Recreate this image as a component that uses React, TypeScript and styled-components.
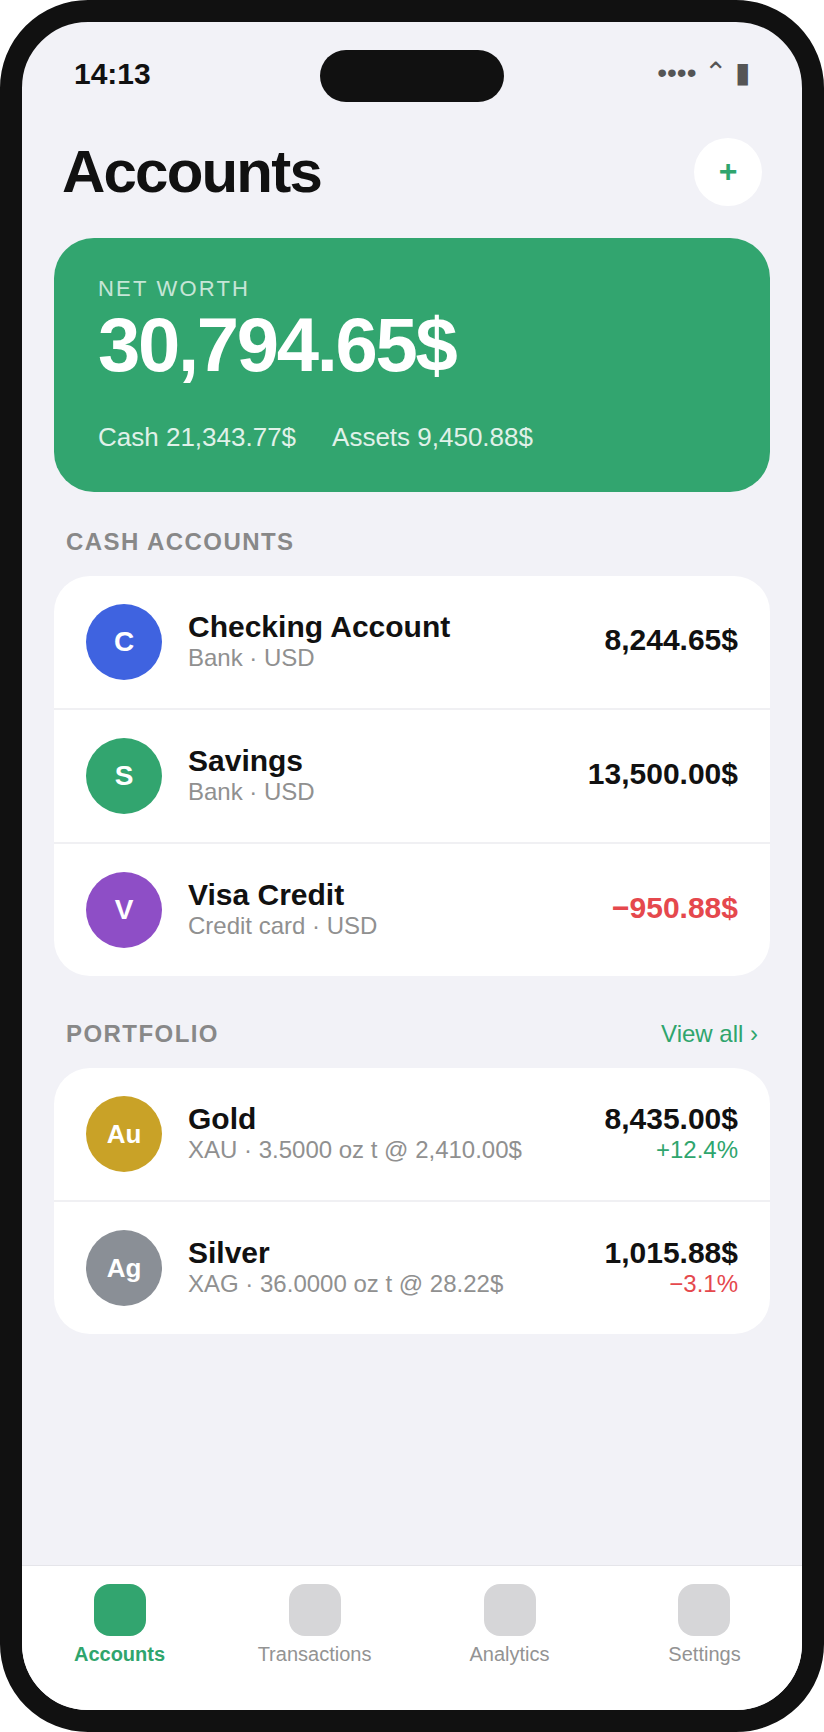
import React from 'react';
import styled, { createGlobalStyle } from 'styled-components';

const GlobalStyle = createGlobalStyle`
  html, body {
    margin: 0;
    padding: 0;
    background: #fff;
  }
  body {
    font-family: "Liberation Sans", Arial, sans-serif;
  }
`;

const Phone = styled.div`
  position: relative;
  width: 824px;
  height: 1732px;
  box-sizing: border-box;
  border: 22px solid #111;
  border-radius: 88px;
  background: #f2f2f7;
  overflow: hidden;
  display: flex;
  flex-direction: column;
`;

const Island = styled.div`
  position: absolute;
  top: 28px;
  left: 298px;
  width: 184px;
  height: 52px;
  border-radius: 26px;
  background: #111;
`;

const StatusBar = styled.div`
  display: flex;
  justify-content: space-between;
  align-items: center;
  height: 52px;
  margin-top: 26px;
  padding: 0 52px;
  flex: none;
`;

const Time = styled.span`
  font-size: 30px;
  font-weight: 700;
  color: #111;
`;

const StatusIcons = styled.span`
  font-size: 28px;
  color: #555;
  padding-bottom: 4px;
`;

const Content = styled.main`
  flex: 1;
  padding: 38px 32px 0;
  display: flex;
  flex-direction: column;
`;

const Header = styled.header`
  display: flex;
  justify-content: space-between;
  align-items: center;
  padding: 0 8px;
  margin-bottom: 32px;
`;

const Title = styled.h1`
  margin: 0;
  font-size: 60px;
  line-height: 68px;
  font-weight: 700;
  letter-spacing: -1.8px;
  color: #111;
`;

const AddButton = styled.button`
  width: 68px;
  height: 68px;
  border: 0;
  border-radius: 50%;
  background: #fff;
  color: #2fa56d;
  font: 700 32px "Liberation Sans", Arial, sans-serif;
  padding: 0 0 2px;
`;

const NetCard = styled.section`
  background: #32a56f;
  border-radius: 40px;
  padding: 37px 44px;
  height: 254px;
  box-sizing: border-box;
  color: #fff;
`;

const NetLabel = styled.div`
  font-size: 22px;
  line-height: 28px;
  letter-spacing: 2.2px;
  opacity: 0.72;
`;

const NetValue = styled.div`
  font-size: 76px;
  line-height: 84px;
  font-weight: 700;
  letter-spacing: -2.28px;
`;

const NetSplit = styled.div`
  display: flex;
  gap: 36px;
  margin-top: 34px;
  font-size: 26px;
  line-height: 32px;
  opacity: 0.85;
`;

const SectionHead = styled.div<{ $top: number }>`
  display: flex;
  justify-content: space-between;
  align-items: center;
  padding: 0 12px;
  margin: ${(p) => p.$top}px 0 20px;
`;

const SectionLabel = styled.h2`
  margin: 0;
  font-size: 24px;
  line-height: 28px;
  font-weight: 700;
  letter-spacing: 1.44px;
  color: #888;
`;

const ViewAll = styled.span`
  font-size: 24px;
  line-height: 28px;
  color: #2fa56d;
`;

const Card = styled.section`
  background: #fff;
  border-radius: 36px;
`;

const Row = styled.div`
  display: flex;
  align-items: center;
  height: 132px;
  padding: 0 32px;
  gap: 26px;
  & + & {
    border-top: 2px solid #f0f0f3;
  }
`;

const Avatar = styled.div<{ $bg: string; $wide?: boolean }>`
  width: 76px;
  height: 76px;
  flex: none;
  border-radius: 50%;
  background: ${(p) => p.$bg};
  color: #fff;
  font-size: ${(p) => (p.$wide ? 26 : 28)}px;
  font-weight: 700;
  display: flex;
  align-items: center;
  justify-content: center;
`;

const Info = styled.div`
  flex: 1;
  min-width: 0;
`;

const Name = styled.div`
  font-size: 30px;
  line-height: 31px;
  font-weight: 700;
  color: #111;
`;

const Sub = styled.div`
  font-size: 24px;
  line-height: 31px;
  color: #909090;
`;

const Amounts = styled.div<{ $lift?: boolean }>`
  text-align: right;
  padding-bottom: ${(p) => (p.$lift ? 6 : 0)}px;
`;

const Amount = styled.div<{ $negative?: boolean }>`
  font-size: 30px;
  line-height: 31px;
  font-weight: 700;
  color: ${(p) => (p.$negative ? '#e5484d' : '#111')};
`;

const Change = styled.div<{ $up: boolean }>`
  font-size: 24px;
  line-height: 31px;
  color: ${(p) => (p.$up ? '#2fa56d' : '#e5484d')};
`;

const Nav = styled.nav`
  flex: none;
  height: 145px;
  box-sizing: border-box;
  border-top: 1px solid #e5e5ea;
  background: #fff;
  display: grid;
  grid-template-columns: repeat(4, 1fr);
  padding-top: 18px;
`;

const Tab = styled.div`
  display: flex;
  justify-content: center;
`;

const TabInner = styled.div`
  display: flex;
  flex-direction: column;
  align-items: center;
  gap: 6px;
`;

const TabIcon = styled.div<{ $active?: boolean }>`
  width: 52px;
  height: 52px;
  border-radius: 16px;
  background: ${(p) => (p.$active ? '#32a56f' : '#d6d6d8')};
`;

const TabLabel = styled.span<{ $active?: boolean }>`
  font-size: 20px;
  line-height: 24px;
  font-weight: ${(p) => (p.$active ? 700 : 400)};
  color: ${(p) => (p.$active ? '#2fa56d' : '#939393')};
`;

const cash = [
  { letter: 'C', bg: '#3f63e0', name: 'Checking Account', sub: 'Bank · USD', amount: '8,244.65$' },
  { letter: 'S', bg: '#32a56f', name: 'Savings', sub: 'Bank · USD', amount: '13,500.00$' },
  { letter: 'V', bg: '#8e4ec6', name: 'Visa Credit', sub: 'Credit card · USD', amount: '−950.88$', negative: true },
];

const portfolio = [
  { letter: 'Au', bg: '#c9a227', name: 'Gold', sub: 'XAU · 3.5000 oz t @ 2,410.00$', amount: '8,435.00$', change: '+12.4%', up: true },
  { letter: 'Ag', bg: '#8a8f96', name: 'Silver', sub: 'XAG · 36.0000 oz t @ 28.22$', amount: '1,015.88$', change: '−3.1%', up: false },
];

const tabs = ['Accounts', 'Transactions', 'Analytics', 'Settings'];

export default function App() {
  return (
    <>
      <GlobalStyle />
      <Phone>
        <Island />
        <StatusBar>
          <Time>14:13</Time>
          <StatusIcons>•••• ⌃ ▮</StatusIcons>
        </StatusBar>
        <Content>
          <Header>
            <Title>Accounts</Title>
            <AddButton>+</AddButton>
          </Header>
          <NetCard>
            <NetLabel>NET WORTH</NetLabel>
            <NetValue>30,794.65$</NetValue>
            <NetSplit>
              <span>Cash 21,343.77$</span>
              <span>Assets 9,450.88$</span>
            </NetSplit>
          </NetCard>
          <SectionHead $top={36}>
            <SectionLabel>CASH ACCOUNTS</SectionLabel>
          </SectionHead>
          <Card>
            {cash.map((item) => (
              <Row key={item.name}>
                <Avatar $bg={item.bg}>{item.letter}</Avatar>
                <Info>
                  <Name>{item.name}</Name>
                  <Sub>{item.sub}</Sub>
                </Info>
                <Amounts $lift>
                  <Amount $negative={item.negative}>{item.amount}</Amount>
                </Amounts>
              </Row>
            ))}
          </Card>
          <SectionHead $top={44}>
            <SectionLabel>PORTFOLIO</SectionLabel>
            <ViewAll>View all ›</ViewAll>
          </SectionHead>
          <Card>
            {portfolio.map((item) => (
              <Row key={item.name}>
                <Avatar $bg={item.bg} $wide>{item.letter}</Avatar>
                <Info>
                  <Name>{item.name}</Name>
                  <Sub>{item.sub}</Sub>
                </Info>
                <Amounts>
                  <Amount>{item.amount}</Amount>
                  <Change $up={item.up}>{item.change}</Change>
                </Amounts>
              </Row>
            ))}
          </Card>
        </Content>
        <Nav>
          {tabs.map((tab, i) => (
            <Tab key={tab}>
              <TabInner>
                <TabIcon $active={i === 0} />
                <TabLabel $active={i === 0}>{tab}</TabLabel>
              </TabInner>
            </Tab>
          ))}
        </Nav>
      </Phone>
    </>
  );
}
